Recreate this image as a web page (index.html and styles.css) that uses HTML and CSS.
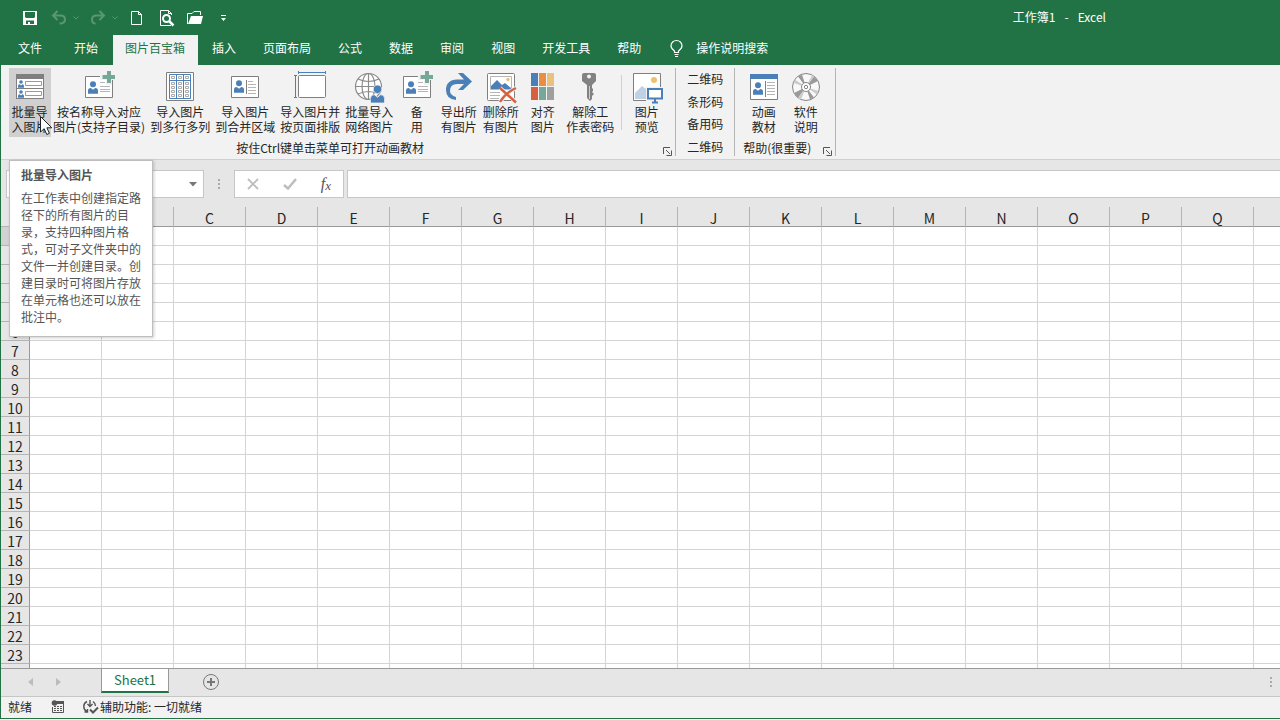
FILE: index.html
```html
<!DOCTYPE html>
<html lang="zh-CN">
<head>
    <meta charset="UTF-8">
    <meta name="viewport" content="width=device-width, initial-scale=1.0">
    <title>工作簿1 - Excel</title>
    <link rel="stylesheet" href="styles.css">
</head>
<body>
    <svg class="sprites" width="0" height="0" aria-hidden="true">
        <symbol id="person" viewBox="0 0 11 14">
            <circle cx="5.5" cy="3.3" r="3.3"/>
            <path d="M0 14V10.5Q0 7.5 3 7.5L5.5 9.6L8 7.5Q11 7.5 11 10.5V14Z"/>
        </symbol>
        <symbol id="card-plus" viewBox="0 0 32 32" overflow="visible">
            <path d="M2.5 5.5H29.5V26.5H2.5Z" fill="#fff" stroke="#7f7f7f"/>
            <use href="#person" x="5" y="10" width="10" height="13" fill="#4a7fb8"/>
            <path d="M17 11.5H22M17 15.5H27M17 18.5H27M17 20.5H27" stroke="#b5b5b5"/>
            <path d="M18 4H24V-1H28V4H33V8H28V13H24V8H18Z" fill="#f2f2f2" stroke="#f2f2f2" stroke-width="2"/>
            <path d="M19.5 6H32M26 0V12" stroke="#76a797" stroke-width="4"/>
        </symbol>
    </svg>

    <div class="window">
        <header class="titlebar">
            <div class="quick">
                <button type="button" aria-label="保存"><svg width="16" height="16"><path d="M1 1H15V15H1ZM3 2V7L4 8H12L13 7V2ZM4 10.500V14H6V12H8V14H12V10.500Z" fill="#fff" fill-rule="evenodd"/></svg></button>
                <div class="split faded">
                    <button type="button" aria-label="撤消"><svg width="16" height="16" fill="none" stroke="#fff" stroke-width="2"><path d="M6.500 1L2 5.500L6.500 10M2 5.500H9.500Q14 5.500 14 9.500Q14 13.500 8.500 13.500"/></svg></button>
                    <button type="button" aria-label="撤消列表"><svg width="8" height="16" fill="none" stroke="#fff"><path d="M1.500 6.500L4 9L6.500 6.500"/></svg></button>
                </div>
                <div class="split faded">
                    <button type="button" aria-label="恢复"><svg width="16" height="16" fill="none" stroke="#fff" stroke-width="2"><path d="M9.500 1L14 5.500L9.500 10M14 5.500H6.500Q2 5.500 2 9.500Q2 13.500 5.500 13.500"/></svg></button>
                    <button type="button" aria-label="恢复列表"><svg width="8" height="16" fill="none" stroke="#fff"><path d="M1.500 6.500L4 9L6.500 6.500"/></svg></button>
                </div>
                <button type="button" aria-label="新建"><svg width="16" height="16" fill="none" stroke="#fff"><path d="M2.500 1.500H9.500L12.500 4.500V14.500H2.500ZM9.500 1.500V4.500H12.500"/></svg></button>
                <button type="button" aria-label="打印预览"><svg width="16" height="16" fill="none" stroke="#fff"><path d="M7 15.500H2.500V.5H10.500L13.500 3.500V5M10.500 .5V3.500H13.500M13 15.500H7"/><circle cx="8.500" cy="8.500" r="3.500" stroke-width="2"/><path d="M11 11L15.500 15.500" stroke-width="2.500"/></svg></button>
                <button type="button" aria-label="打开"><svg width="18" height="16"><path d="M.5 14V3.500H5L7 1.500H13.500V5" fill="none" stroke="#fff"/><path d="M1 14L4 6H16L14 14Z" fill="#fff"/></svg></button>
                <button type="button" aria-label="自定义快速访问工具栏"><svg width="8" height="16"><path d="M3 5H8V6H3ZM3 8H8L5.500 11Z" fill="#fff"/></svg></button>
            </div>
            <h1 class="title"><span>工作簿1</span><span>-</span><span>Excel</span></h1>
        </header>

        <nav class="tabs">
            <button type="button" class="tab file">文件</button>
            <button type="button" class="tab">开始</button>
            <button type="button" class="tab active">图片百宝箱</button>
            <button type="button" class="tab">插入</button>
            <button type="button" class="tab">页面布局</button>
            <button type="button" class="tab">公式</button>
            <button type="button" class="tab">数据</button>
            <button type="button" class="tab">审阅</button>
            <button type="button" class="tab">视图</button>
            <button type="button" class="tab">开发工具</button>
            <button type="button" class="tab">帮助</button>
            <button type="button" class="tab search">
                <svg width="13" height="16" fill="none" stroke="#fff" stroke-width="1.200"><path d="M4.500 12.500V11Q1 8.500 1 5.800A5.500 5.300 0 0 1 12 5.800Q12 8.500 8.500 11V12.500ZM4.500 14.500H8.500M5 16.500H8"/></svg>
                操作说明搜索
            </button>
        </nav>

        <section class="ribbon">
            <div class="group">
                <div class="tools">
                    <div class="hovered">
                        <button type="button" class="tool on" aria-describedby="tip">
                            <svg width="32" height="32"><path d="M2 3H30V28H2Z" fill="#7f7f7f"/><path d="M3 8H29V17H3ZM3 18H29V27H3Z" fill="#fff"/><use href="#person" x="4" y="9" width="6" height="8" fill="#4a7fb8"/><use href="#person" x="4" y="19" width="6" height="8" fill="#4a7fb8"/><path d="M11.500 10.500H27.500V14.500H11.500ZM11.500 20.500H27.500V24.500H11.500Z" fill="none" stroke="#9a9a9a"/></svg>
                            <span>批量导<br>入图片</span>
                        </button>
                        <svg class="cursor" width="13" height="20"><path d="M.5 .5V16L4.200 12.700L6.800 18.500L9.400 17.300L6.900 11.800H11.800Z" fill="#fff" stroke="#222"/></svg>
                        <div class="tooltip" id="tip" role="tooltip">
                            <h2>批量导入图片</h2>
                            <p>在工作表中创建指定路径下的所有图片的目录，支持四种图片格式，可对子文件夹中的文件一并创建目录。创建目录时可将图片存放在单元格也还可以放在批注中。</p>
                        </div>
                    </div>
                    <button type="button" class="tool">
                        <svg width="32" height="32"><use href="#card-plus" width="32" height="32"/></svg>
                        <span>按名称导入对应<br>图片(支持子目录)</span>
                    </button>
                    <button type="button" class="tool">
                        <svg width="32" height="32" fill="none"><path d="M2.500 1.500H29.500V29.500H2.500Z" fill="#fff" stroke="#7f7f7f"/><path d="M5.500 3.500H26.500V27.500H5.500ZM5.500 9.500H26.500M12.500 3.500V27.500M19.500 3.500V27.500" stroke="#4a7fb8"/><path d="M7.500 5.500h3v2h-3zM14.500 5.500h3v2h-3zM21.500 5.500h3v2h-3zM7.500 11.500h3v2h-3zM14.500 11.500h3v2h-3zM21.500 11.500h3v2h-3zM7.500 15.500h3v2h-3zM14.500 15.500h3v2h-3zM21.500 15.500h3v2h-3zM7.500 19.500h3v2h-3zM14.500 19.500h3v2h-3zM21.500 19.500h3v2h-3zM7.500 23.500h3v2h-3zM14.500 23.500h3v2h-3zM21.500 23.500h3v2h-3z" stroke="#aaa"/></svg>
                        <span>导入图片<br>到多行多列</span>
                    </button>
                    <button type="button" class="tool">
                        <svg width="32" height="32"><path d="M2.500 5.500H29.500V26.500H2.500Z" fill="#fff" stroke="#7f7f7f"/><use href="#person" x="5" y="9" width="10" height="13" fill="#4a7fb8"/><path d="M17.500 9V23" stroke="#7f7f7f"/><path d="M19 10.500H24M19 13.500H27M19 16.500H27M19 19.500H27M19 22.500H27" stroke="#b5b5b5"/></svg>
                        <span>导入图片<br>到合并区域</span>
                    </button>
                    <button type="button" class="tool">
                        <svg width="32" height="32" fill="none"><rect x="4.500" y="4.500" width="27" height="22" rx="1" fill="#fff" stroke="#7f7f7f"/><path d="M4 1.500H32M4.500 0V3M31.500 0V3M1.500 4V27M0 4.500H3M0 26.500H3" stroke="#4a7fb8"/></svg>
                        <span>导入图片并<br>按页面排版</span>
                    </button>
                    <button type="button" class="tool">
                        <svg width="32" height="32"><g fill="#fff" stroke="#8a8a8a" stroke-width="1.200"><circle cx="15.500" cy="15.500" r="13"/><ellipse cx="15.500" cy="15.500" rx="6.500" ry="13" fill="none"/><path d="M15.500 2.500V28.500M2.500 15.500H28.500M5 8Q15.500 13 26 8M5 23Q15.500 18 26 23" fill="none"/></g><use href="#person" x="17" y="14" width="15" height="18" fill="#4a7fb8" stroke="#f2f2f2" stroke-width=".6"/></svg>
                        <span>批量导入<br>网络图片</span>
                    </button>
                    <button type="button" class="tool">
                        <svg width="32" height="32"><use href="#card-plus" width="32" height="32"/></svg>
                        <span>备<br>用</span>
                    </button>
                    <button type="button" class="tool">
                        <svg width="32" height="32"><path d="M15 2H20L29 10.500L20 19H15L21 13H14Q7 13 7 20Q7 24 13 26V29Q3 28 3 19Q3 9 14 8.500H21Z" fill="#4a7fb8"/></svg>
                        <span>导出所<br>有图片</span>
                    </button>
                    <button type="button" class="tool">
                        <svg width="32" height="32" fill="none"><rect x="2.500" y="2.500" width="27" height="27" rx="1" fill="#fff" stroke="#7f7f7f"/><path d="M5.500 5.500H26.500V18.500H5.500Z" stroke="#b5b5b5"/><path d="M6 18V15L12 9L17 14L20 12L26 17V18Z" fill="#4a7fb8"/><circle cx="23" cy="8.500" r="1.700" fill="#eec171"/><path d="M5 21.500H15M5 24.500H15M5 27.500H14" stroke="#b5b5b5"/><path d="M15 17L31 31M31 17Q21 22 15 31" stroke="#f2f2f2" stroke-width="4"/><path d="M14.500 16.500L31 31.500M31 17Q20 22 15 31" stroke="#d9603f" stroke-width="2.400"/></svg>
                        <span>删除所<br>有图片</span>
                    </button>
                    <button type="button" class="tool">
                        <svg width="32" height="32"><path d="M4 2h7v13H4z" fill="#4a7fb8"/><path d="M12 2h7v13h-7z" fill="#e88f43"/><path d="M20 2h7v13h-7z" fill="#ebc181"/><path d="M4 16h7v13H4z" fill="#d9603f"/><path d="M12 16h7v13h-7z" fill="#76a797"/><path d="M20 16h7v13h-7z" fill="#9f9f9f"/></svg>
                        <span>对齐<br>图片</span>
                    </button>
                    <button type="button" class="tool">
                        <svg width="32" height="32"><path d="M10 2H20Q22 2 22 4V10L18 14V17L19 18V20L18 21L20 23L18 25V28L16 30L13 27V14L8 10V4Q8 2 10 2ZM15 3.500A2 2 0 0 0 15 7.500A2 2 0 0 0 15 3.500Z" fill="#828282" fill-rule="evenodd"/><path d="M15.500 15V28" stroke="#ccc"/></svg>
                        <span>解除工<br>作表密码</span>
                    </button>
                    <div class="divider"></div>
                    <button type="button" class="tool">
                        <svg width="32" height="32"><path d="M2.500 2.500H29.500V29.500H2.500Z" fill="#fff" stroke="#7f7f7f"/><circle cx="23" cy="9" r="3" fill="#eec171"/><path d="M4 28V22L11 15L15 18V28Z" fill="#c0d1e4"/><path d="M15 16H33V33H15Z" fill="#f2f2f2"/><path d="M17 18H31V27.500H17Z" fill="#fff" stroke="#4a7fb8" stroke-width="2"/><path d="M24 28V31M21 31.500H27" stroke="#4a7fb8" stroke-width="2"/></svg>
                        <span>图片<br>预览</span>
                    </button>
                </div>
                <div class="caption">
                    <span>按住Ctrl键单击菜单可打开动画教材</span>
                    <button type="button" class="launcher" aria-label="更多选项"><svg width="9" height="9" fill="none" stroke="#555"><path d="M.5 7V.5H7M3 3L7 7M8.500 3.500V8.500H3.500"/></svg></button>
                </div>
            </div>

            <div class="group codes">
                <button type="button">二维码</button>
                <button type="button">条形码</button>
                <button type="button">备用码</button>
                <button type="button">二维码</button>
            </div>

            <div class="group">
                <div class="tools">
                    <button type="button" class="tool">
                        <svg width="32" height="32"><path d="M2.500 5.500H29.500V28.500H2.500Z" fill="#fff" stroke="#7f7f7f"/><path d="M2 3H30V8H2Z" fill="#4a7fb8"/><use href="#person" x="5" y="11" width="10" height="13" fill="#4a7fb8"/><path d="M17.500 10V26" stroke="#7f7f7f"/><path d="M19 11.500H27M19 14.500H27M19 17.500H27M19 20.500H27M19 23.500H27" stroke="#b5b5b5"/></svg>
                        <span>动画<br>教材</span>
                    </button>
                    <button type="button" class="tool">
                        <svg width="32" height="32"><circle cx="16" cy="16" r="13.500" fill="#f8f8f8" stroke="#858585"/><path d="M16 16L8 5.500L12 3.500ZM16 16L24 5.500L28 10ZM16 16L8 27L4 22ZM16 16L24 26.500L20 28.500Z" fill="#9a9a9a"/><path d="M16 16L3.500 12L5 8.500ZM16 16L28.500 20L27 23.500ZM16 16L22 4L24 5.500ZM16 16L8 27L11 28.500Z" fill="#ccc"/><circle cx="16" cy="16" r="4.500" fill="#fff" stroke="#858585"/><circle cx="16" cy="16" r="1.700" fill="#fff" stroke="#858585"/></svg>
                        <span>软件<br>说明</span>
                    </button>
                </div>
                <div class="caption">
                    <span>帮助(很重要)</span>
                    <button type="button" class="launcher" aria-label="更多帮助"><svg width="9" height="9" fill="none" stroke="#555"><path d="M.5 7V.5H7M3 3L7 7M8.500 3.500V8.500H3.500"/></svg></button>
                </div>
            </div>
        </section>

        <div class="formula-bar">
            <div class="box name-box">
                <input type="text" aria-label="名称框">
                <button type="button" aria-label="名称列表"><svg width="8" height="5"><path d="M0 0H8L4 4.500Z" fill="#777"/></svg></button>
            </div>
            <div class="dots"><i></i><i></i><i></i></div>
            <div class="box actions">
                <button type="button" aria-label="取消"><svg width="12" height="12" fill="none" stroke="#bdbdbd" stroke-width="1.800"><path d="M1 1L11 11M11 1L1 11"/></svg></button>
                <button type="button" aria-label="输入"><svg width="14" height="12" fill="none" stroke="#bdbdbd" stroke-width="2.500"><path d="M1 7L5 10.500L13 1"/></svg></button>
                <button type="button" class="fx" aria-label="插入函数">f<sub>x</sub></button>
            </div>
            <div class="box formula"><input type="text" aria-label="编辑栏"></div>
        </div>

        <main class="sheet">
            <table class="grid" id="grid"></table>
        </main>

        <div class="sheet-bar">
            <div class="arrows">
                <button type="button" aria-label="上一张"><svg width="5" height="8"><path d="M5 0V8L0 4Z" fill="#bcbcbc"/></svg></button>
                <button type="button" aria-label="下一张"><svg width="5" height="8"><path d="M0 0V8L5 4Z" fill="#bcbcbc"/></svg></button>
            </div>
            <button type="button" class="sheet-tab">Sheet1</button>
            <button type="button" class="add" aria-label="新工作表"><svg width="18" height="18" fill="none" stroke="#777"><circle cx="9" cy="9" r="7.500"/><path d="M5 9H13M9 5V13" stroke-width="2"/></svg></button>
            <div class="dots"><i></i><i></i><i></i></div>
        </div>

        <footer class="status">
            <span>就绪</span>
            <svg width="14" height="14"><path d="M5 1.500H12.500V12.500H1.500V7" fill="none" stroke="#555"/><path d="M6 1H13V4H6Z" fill="#555"/><circle cx="3.500" cy="3" r="2.800" fill="#555"/><path d="M3 6.500H11M3 8.500H11M3 10.500H11" stroke="#555" stroke-dasharray="2 1"/></svg>
            <span class="access">
                <svg width="17" height="14" fill="none" stroke="#555" stroke-width="1.400"><path d="M5 1.500A5.500 5.500 0 0 0 5 11.500M2.500 12H5.500V9M8 0V5M5.500 4L8 6.500L10.500 4M11 1.500A5.500 5.500 0 0 1 13.500 6"/><path d="M8 9.500L11 12.500L16 7.500" stroke-width="2"/></svg>
                辅助功能: 一切就绪
            </span>
        </footer>
    </div>

    <script>
        const letters = 'ABCDEFGHIJKLMNOPQR'.split('');
        let html = '<thead><tr><th></th>';
        letters.forEach(l => html += `<th scope="col">${l}</th>`);
        html += '</tr></thead><tbody>';
        for (let r = 1; r <= 24; r++) {
            html += `<tr><th scope="row"${r === 1 ? ' class="current"' : ''}>${r}</th>${'<td></td>'.repeat(letters.length)}</tr>`;
        }
        document.getElementById('grid').innerHTML = html + '</tbody>';
    </script>
</body>
</html>
```

FILE: styles.css
```css
* {
    box-sizing: border-box;
}
body {
    margin: 0;
    background-color: #f2f2f2;
    color: #262626;
    font-family: "Noto Sans CJK SC", sans-serif;
    font-size: 12px;
    line-height: 16px;
    overflow: hidden;
}
button, input {
    margin: 0;
    padding: 0;
    border: none;
    background: none;
    color: inherit;
    font: inherit;
}
svg {
    display: block;
    flex: none;
    overflow: visible;
}
.sprites {
    position: absolute;
}
.window {
    display: flex;
    flex-direction: column;
    height: calc(100vh - 1px);
    border-left: 1px solid #217346;
    border-bottom: 1px solid #217346;
}

/* title bar and tabs */
.titlebar {
    display: flex;
    align-items: center;
    justify-content: space-between;
    height: 35px;
    padding: 0 174px 0 21px;
    background-color: #217346;
    color: #fff;
}
.quick, .split {
    display: flex;
    align-items: center;
    gap: 13px;
}
.split {
    gap: 5px;
    margin-right: -3px;
}
.faded {
    opacity: 0.25;
}
.title {
    display: flex;
    gap: 9px;
    margin: 0;
    padding-bottom: 2px;
    font-size: 12px;
    font-weight: normal;
}
.tabs {
    display: flex;
    gap: 2px;
    height: 30px;
    padding-left: 5px;
    background-color: #217346;
    color: #fff;
}
.tab {
    padding: 0 13px 4px 12px;
    white-space: nowrap;
}
.tab.file {
    margin-right: 5px;
}
.tab.active {
    background-color: #f2f2f2;
    color: #217346;
}
.tab.search {
    display: flex;
    align-items: center;
    gap: 13px;
    padding-left: 14px;
}

/* ribbon */
.ribbon {
    display: flex;
    height: 95px;
    padding: 3px 0;
    border-bottom: 1px solid #d0d0d0;
    background-color: #f2f2f2;
}
.group {
    display: flex;
    flex-direction: column;
    padding: 0 7px 0 8px;
    border-right: 1px solid #b5b5b5;
}
.tools {
    display: flex;
}
.hovered {
    position: relative;
}
.tool {
    display: flex;
    flex-direction: column;
    align-items: center;
    gap: 1px;
    min-width: 42px;
    padding: 3px 3px 3px 2px;
    line-height: 15px;
    white-space: nowrap;
}
.tool.on {
    background-color: #d0d0d0;
}
.divider {
    width: 1px;
    margin: 7px 4px;
    background-color: #d0d0d0;
}
.caption {
    display: flex;
    align-items: center;
    margin: 3px -4px 0 0;
    text-align: center;
}
.caption span {
    flex: 1;
}
.launcher {
    padding: 6px 0 0 12px;
}
.codes {
    justify-content: space-between;
    padding: 3px 11px 1px;
}
.cursor {
    position: absolute;
    top: 48px;
    left: 31px;
    z-index: 3;
}
.tooltip {
    position: absolute;
    top: 92px;
    left: 0;
    z-index: 2;
    width: 144px;
    padding: 6px 10px 11px 11px;
    border: 1px solid #bebebe;
    background-color: #fff;
    box-shadow: 1px 1px 3px rgba(0, 0, 0, 0.2);
    color: #555;
}
.tooltip h2 {
    margin: 0 0 6px;
    font-size: 12px;
}
.tooltip p {
    margin: 0;
    line-height: 17px;
}

/* formula bar */
.formula-bar {
    display: flex;
    height: 47px;
    padding: 10px 0 9px 5px;
    background-color: #e6e6e6;
}
.box {
    display: flex;
    align-items: center;
    border: 1px solid #c6c6c6;
    background-color: #fff;
}
.name-box {
    width: 198px;
    padding-right: 6px;
}
.name-box input, .formula input {
    flex: 1;
    min-width: 0;
    height: 24px;
    padding: 0 6px;
}
.dots {
    display: flex;
    flex-direction: column;
    justify-content: center;
    gap: 2px;
    width: 30px;
}
.dots i {
    width: 2px;
    height: 2px;
    margin: 0 auto;
    background-color: #aaa;
}
.actions {
    justify-content: space-around;
    width: 110px;
    margin-right: 3px;
}
.fx {
    color: #555;
    font: italic 16px/16px "Liberation Serif", serif;
}
.fx sub {
    font-size: 13px;
    line-height: 0;
    vertical-align: -1px;
}
.formula {
    flex: 1;
    border-right: none;
}

/* cells */
.sheet {
    flex: 1;
    min-height: 0;
    overflow: hidden;
    background-color: #fff;
}
.grid {
    border-collapse: separate;
    border-spacing: 0;
}
.grid th, .grid td {
    height: 19px;
    min-width: 72px;
    padding: 0;
    border-right: 1px solid #d4d4d4;
    border-bottom: 1px solid #d4d4d4;
}
.grid th {
    padding-top: 2px;
    background-color: #e6e6e6;
    font-size: 14px;
    font-weight: normal;
    line-height: 16px;
}
.grid thead th {
    height: 20px;
    padding-top: 3px;
    border-right-color: #b5b5b5;
    border-bottom-color: #999;
}
.grid tr th:first-child {
    min-width: 29px;
    border-right-color: #999;
    border-bottom-color: #b5b5b5;
}
.grid .current {
    background-color: #d2d2d2;
}

/* sheet tabs and status */
.sheet-bar {
    display: flex;
    align-items: flex-start;
    height: 29px;
    border-top: 1px solid #999;
    border-bottom: 1px solid #c6c6c6;
    background-color: #e6e6e6;
}
.arrows {
    display: flex;
    gap: 23px;
    width: 100px;
    padding: 9px 0 0 27px;
}
.sheet-tab {
    height: 24px;
    padding: 0 12px;
    border: 1px solid #999;
    border-top: none;
    border-bottom: 2px solid #217346;
    background-color: #fff;
    color: #217346;
    font-size: 13px;
}
.add {
    margin: 4px auto 0 33px;
}
.sheet-bar .dots {
    width: 18px;
    height: 26px;
}
.status {
    display: flex;
    align-items: center;
    gap: 19px;
    height: 21px;
    padding: 0 0 2px 7px;
}
.access {
    display: flex;
    align-items: center;
    gap: 1px;
    margin-left: -2px;
}
```
